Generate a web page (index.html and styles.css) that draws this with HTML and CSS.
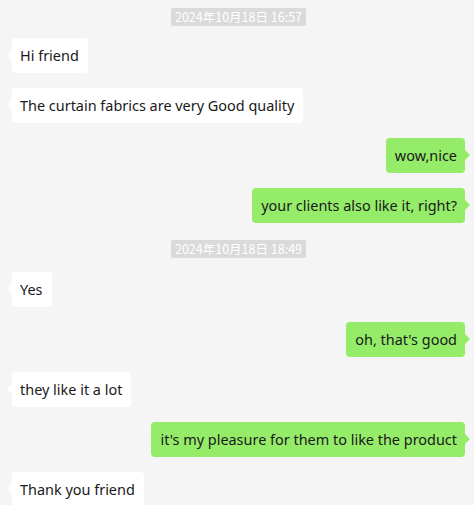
FILE: index.html
```html
<!DOCTYPE html>
<html>
<head>
<meta charset="utf-8">
<link rel="stylesheet" href="styles.css">
</head>
<body>
<div class="chat">
  <div class="time"><span>2024年10月18日 16:57</span></div>
  <div class="row left"><div class="bubble">Hi friend</div></div>
  <div class="row left"><div class="bubble">The curtain fabrics are very Good quality</div></div>
  <div class="row right"><div class="bubble">wow,nice</div></div>
  <div class="row right"><div class="bubble">your clients also like it, right?</div></div>
  <div class="time t2"><span>2024年10月18日 18:49</span></div>
  <div class="row left"><div class="bubble">Yes</div></div>
  <div class="row right"><div class="bubble">oh, that's good</div></div>
  <div class="row left"><div class="bubble">they like it a lot</div></div>
  <div class="row right"><div class="bubble">it's my pleasure for them to like the product</div></div>
  <div class="row left"><div class="bubble">Thank you friend</div></div>
</div>
</body>
</html>
```
FILE: styles.css
```css
html, body {
  margin: 0;
  padding: 0;
  background: #f5f5f5;
  height: 505px;
  overflow: hidden;
}
.chat {
  display: flex;
  flex-direction: column;
  padding: 8px 9px 0 12px;
  font-family: "Noto Sans", "Noto Sans CJK SC", sans-serif;
  color: #191919;
}
.time {
  display: flex;
  justify-content: center;
  margin-bottom: 12px;
}
.time.t2 {
  margin-top: 2px;
  margin-bottom: 14px;
}
.time span {
  background: #dadada;
  color: #ffffff;
  font-family: "Noto Sans CJK SC", sans-serif;
  font-size: 12.5px;
  line-height: 18px;
  padding: 0 4px;
  border-radius: 2px;
}
.row {
  display: flex;
  margin-bottom: 15px;
}
.row.right {
  justify-content: flex-end;
}
.bubble {
  position: relative;
  font-size: 14.45px;
  line-height: 19px;
  padding: 8px 9px 8px 8px;
  border-radius: 4px;
  background: #ffffff;
  white-space: nowrap;
}
.right .bubble {
  background: #95ec69;
  padding: 8px 8px 8px 9px;
}
.bubble::before {
  content: "";
  position: absolute;
  top: 12px;
  width: 0;
  height: 0;
  border-top: 5px solid transparent;
  border-bottom: 5px solid transparent;
}
.left .bubble::before {
  left: -5px;
  border-right: 5px solid #ffffff;
}
.right .bubble::before {
  right: -5px;
  border-left: 5px solid #95ec69;
}
```
